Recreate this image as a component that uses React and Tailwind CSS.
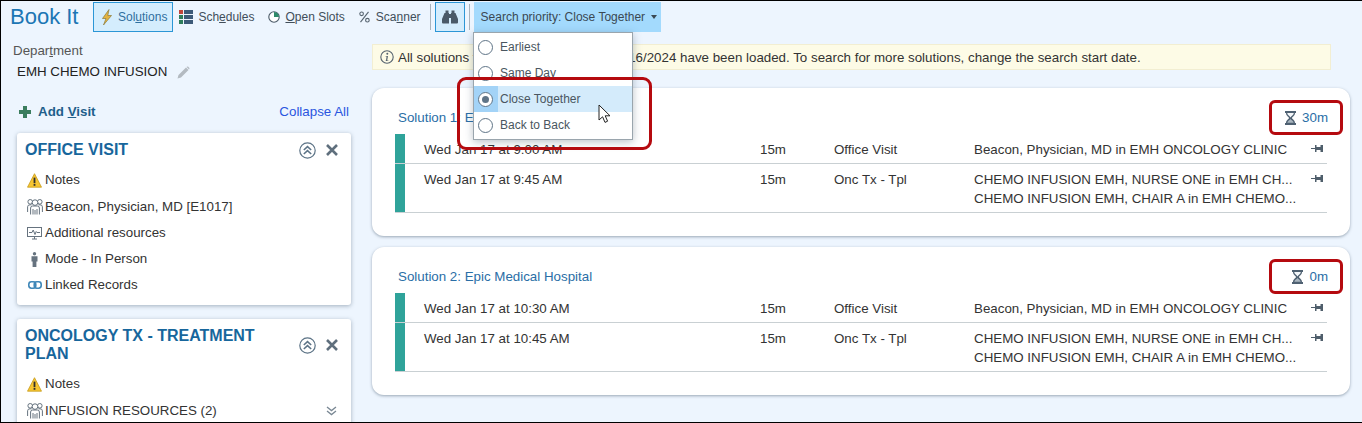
import { Fragment } from 'react';

const FONT = "font-['Liberation_Sans',Arial,sans-serif]";

function Bolt() {
  return (
    <svg width="12" height="17" viewBox="0 0 12 17">
      <path d="M8 0.5 L1.5 9.5 H5 L2.5 16 L10.5 6.5 H6.8 Z" fill="#e3b341" stroke="#8a7a3a" strokeWidth="0.7" />
    </svg>
  );
}

function GridIcon() {
  return (
    <svg width="14" height="14" viewBox="0 0 14 14">
      <rect x="0" y="0" width="4" height="4" fill="#c0453a" />
      <rect x="5" y="0" width="9" height="4" fill="#3d5a78" />
      <rect x="0" y="5" width="4" height="4" fill="#2e7d5b" />
      <rect x="5" y="5" width="9" height="4" fill="#3d5a78" />
      <rect x="0" y="10" width="4" height="4" fill="#2e7d5b" />
      <rect x="5" y="10" width="9" height="4" fill="#3d5a78" />
    </svg>
  );
}

function PieIcon() {
  return (
    <svg width="12" height="12" viewBox="0 0 12 12">
      <circle cx="6" cy="6" r="5.2" fill="#fff" stroke="#4a5a68" strokeWidth="1.1" />
      <path d="M6 6 V1 A5 5 0 0 1 11 6 Z" fill="#2e8a6a" />
    </svg>
  );
}

function PercentIcon() {
  return (
    <svg width="11" height="12" viewBox="0 0 11 12" fill="none" stroke="#56636f" strokeWidth="1.1">
      <circle cx="2.6" cy="2.8" r="1.8" />
      <circle cx="8.4" cy="9.2" r="1.8" />
      <path d="M9.5 0.8 L1.5 11.2" />
    </svg>
  );
}

function Binoculars() {
  return (
    <svg width="16" height="14" viewBox="0 0 16 14" fill="#4a5a68">
      <path d="M3.5 0.5 H6.5 V3 H7 V13.5 H1 Q0 13.5 0 12.5 V9 L2.5 3 H3.5 Z" />
      <path d="M9.5 0.5 H12.5 V3 H13.5 L16 9 V12.5 Q16 13.5 15 13.5 H9 V3 H9.5 Z" />
      <rect x="7" y="4" width="2" height="4" />
    </svg>
  );
}

function Pencil() {
  return (
    <svg width="13" height="13" viewBox="0 0 13 13" fill="#b3bac1">
      <path d="M0.5 12.5 L1.5 9 L9 1.5 L11.5 4 L4 11.5 Z" />
      <path d="M9.8 0.8 Q10.6 0.2 11.3 0.8 L12.2 1.7 Q12.8 2.4 12.2 3.2 L12 3.4 L9.6 1 Z" />
    </svg>
  );
}

function Plus() {
  return (
    <svg width="12" height="12" viewBox="0 0 12 12" fill="#3b7d5e">
      <path d="M4 0 H8 V4 H12 V8 H8 V12 H4 V8 H0 V4 H4 Z" />
    </svg>
  );
}

function Info() {
  return (
    <svg width="14" height="14" viewBox="0 0 14 14">
      <circle cx="7" cy="7" r="6.2" fill="none" stroke="#56636f" strokeWidth="1.1" />
      <circle cx="7.3" cy="3.8" r="1" fill="#56636f" />
      <path d="M5.6 6 H8 L7.2 10.4 H8.4 V11 H5.6 V10.4 H6 L6.6 6.6 H5.6 Z" fill="#56636f" />
    </svg>
  );
}

function Warning() {
  return (
    <svg width="15" height="15" viewBox="0 0 15 15">
      <path d="M7.5 0.7 L14.5 14.2 H0.5 Z" fill="#f6c532" stroke="#c79a1a" strokeWidth="0.8" strokeLinejoin="round" />
      <rect x="6.6" y="4.6" width="1.8" height="5.6" fill="#2f2f2f" />
      <rect x="6.6" y="11" width="1.8" height="1.8" fill="#2f2f2f" />
    </svg>
  );
}

function People() {
  return (
    <svg width="16" height="16" viewBox="0 0 16 16" fill="none" stroke="#66737f" strokeWidth="1">
      <circle cx="3.2" cy="2.8" r="2.3" />
      <circle cx="12.8" cy="2.8" r="2.3" />
      <circle cx="8" cy="3.6" r="2.8" fill="#fff" />
      <path d="M0.6 13 V7.8 Q0.6 5.8 3 5.8 H4.6 M15.4 13 V7.8 Q15.4 5.8 13 5.8 H11.4" />
      <path d="M3.6 15.5 V9 Q3.6 7 5.6 7 H10.4 Q12.4 7 12.4 9 V15.5" />
      <path d="M6 15.5 V10 M10 15.5 V10 M8 15.5 V11" />
    </svg>
  );
}

function Monitor() {
  return (
    <svg width="15" height="13" viewBox="0 0 15 13" fill="none" stroke="#66737f" strokeWidth="1">
      <rect x="0.5" y="0.5" width="14" height="9" />
      <path d="M2 5.5 H5 L6.2 3 L8 7.5 L9.2 4.5 L10 5.5 H13" />
      <path d="M5 12 H10 M7.5 9.5 V12" />
    </svg>
  );
}

function Person() {
  return (
    <svg width="7" height="15" viewBox="0 0 7 15" fill="#66737f">
      <circle cx="3.5" cy="1.7" r="1.7" />
      <path d="M0.5 4.2 H6.5 V9.5 H5.4 V15 H1.6 V9.5 H0.5 Z" />
    </svg>
  );
}

function LinkIcon() {
  return (
    <svg width="14" height="8" viewBox="0 0 14 8" fill="none" stroke="#3f87b8" strokeWidth="1.6">
      <rect x="0.8" y="0.8" width="7" height="6.4" rx="2.6" />
      <rect x="6.2" y="0.8" width="7" height="6.4" rx="2.6" />
    </svg>
  );
}

function CollapseBtn() {
  return (
    <svg width="17" height="17" viewBox="0 0 17 17" fill="none" stroke="#5c7386" strokeWidth="1.2">
      <circle cx="8.5" cy="8.5" r="7.7" />
      <path d="M4.8 8 L8.5 4.6 L12.2 8 M4.8 12 L8.5 8.6 L12.2 12" strokeWidth="1.5" />
    </svg>
  );
}

function CloseBtn() {
  return (
    <svg width="12" height="12" viewBox="0 0 12 12" stroke="#5f6f7d" strokeWidth="2.6">
      <path d="M1 1 L11 11 M11 1 L1 11" />
    </svg>
  );
}

function ChevronsDown() {
  return (
    <svg width="11" height="10" viewBox="0 0 11 10" fill="none" stroke="#7a8894" strokeWidth="1.3">
      <path d="M1 1 L5.5 4.6 L10 1 M1 5 L5.5 8.6 L10 5" />
    </svg>
  );
}

function PinIcon() {
  return (
    <svg width="12" height="9" viewBox="0 0 12 9" fill="#4f5e6b">
      <rect x="0" y="4" width="4" height="1" />
      <path d="M4 1 H5.5 V3 H9.5 V1 H12 V8 H9.5 V6 H5.5 V8 H4 Z" />
    </svg>
  );
}

function Hourglass() {
  return (
    <svg width="11" height="14" viewBox="0 0 11 14">
      <path d="M0 0 H11 V2 H10 C10 5 7 5.8 7 7 C7 8.2 10 9 10 12 H11 V14 H0 V12 H1 C1 9 4 8.2 4 7 C4 5.8 1 5 1 2 H0 Z" fill="#4f6172" />
      <path d="M2.2 2 H8.8 C8.7 4.3 6 5.2 5.5 6.4 C5 5.2 2.3 4.3 2.2 2 Z" fill="#f4f7fa" />
      <path d="M5.5 8 C6 9 8.4 9.8 8.7 11.8 H2.3 C2.6 9.8 5 9 5.5 8 Z" fill="#a9b5bf" />
    </svg>
  );
}

function Radio({ checked }) {
  return (
    <span className="flex h-[15px] w-[15px] items-center justify-center rounded-full border border-[#5f7487] bg-white">
      {checked && <span className="h-[7px] w-[7px] rounded-full bg-[#5f7487]" />}
    </span>
  );
}

function Cursor() {
  return (
    <svg width="13" height="20" viewBox="0 0 13 20">
      <path d="M1 1 V16 L4.6 12.8 L7 18.4 L9.6 17.2 L7.2 11.8 H12 Z" fill="#fff" stroke="#222" strokeWidth="1" strokeLinejoin="round" />
    </svg>
  );
}

function ToolItem({ icon, pre, u, post, className }) {
  return (
    <div className={`flex h-[30px] items-center ${className}`}>
      {icon}
      <span>
        {pre}
        <span className="underline">{u}</span>
        {post}
      </span>
    </div>
  );
}

function VisitRow({ icon, children, trailing }) {
  return (
    <div className="flex h-[26px] items-center text-[13.33px] text-[#333] first:h-[27px] first:pb-px">
      <span className="flex w-[21px] shrink-0 items-center justify-center">{icon}</span>
      <span className="flex-1">{children}</span>
      {trailing}
    </div>
  );
}

function VisitCard({ title, children }) {
  return (
    <div className="rounded-[3px] bg-white pt-[8px] pb-[7px] pr-[13px] pl-[8px] shadow-[0_1px_4px_rgba(70,90,110,0.45)]">
      <div className="mb-[8px] flex justify-between">
        <div className="w-[260px] text-[16px] leading-[18px] font-bold text-[#17669c]">{title}</div>
        <div className="flex items-center gap-[10px]">
          <CollapseBtn />
          <CloseBtn />
        </div>
      </div>
      <div className="-ml-[1px]">{children}</div>
    </div>
  );
}

const apptRows = (first, second) => [
  {
    time: first,
    type: 'Office Visit',
    lines: ['Beacon, Physician, MD in EMH ONCOLOGY CLINIC'],
  },
  {
    time: second,
    type: 'Onc Tx - Tpl',
    lines: ['CHEMO INFUSION EMH, NURSE ONE in EMH CH...', 'CHEMO INFUSION EMH, CHAIR A in EMH CHEMO...'],
  },
];

function SolutionCard({ title, wait, rows }) {
  return (
    <div className="h-[148px] rounded-[12px] bg-white pt-[21px] pl-[23px] pr-[23px] shadow-[0_1px_3px_rgba(70,90,110,0.5)]">
      <div className="-mr-px flex h-[18px] items-center justify-between pl-[3px] text-[13.33px] text-[#2a6ea6]">
        <span>{title}</span>
        <span className="flex items-center gap-[6px]">
          <Hourglass />
          {wait}
        </span>
      </div>
      <div className="mt-[7px]">
        {rows.map((r, i) => (
          <div
            key={i}
            className={`flex border-b border-[#c9d0d3] text-[13.33px] leading-[19px] text-[#333] ${i === 0 ? 'h-[30px]' : 'h-[49px]'}`}
          >
            <div className="mr-[19px] w-[10px] shrink-0 bg-[#2fa39a]" />
            <div className="flex flex-1 pt-[6px]">
              <div className="w-[336px] shrink-0">{r.time}</div>
              <div className="w-[74px] shrink-0">15m</div>
              <div className="w-[140px] shrink-0">{r.type}</div>
              <div className="flex-1">
                {r.lines.map((l) => (
                  <Fragment key={l}>
                    {l}
                    <br />
                  </Fragment>
                ))}
              </div>
              <div className="pt-[4px] pr-[4px]">
                <PinIcon />
              </div>
            </div>
          </div>
        ))}
      </div>
    </div>
  );
}

export default function App() {
  return (
    <div className={`relative h-[423px] w-[1362px] overflow-hidden border-t border-b border-l border-black bg-[#edf5fe] ${FONT}`}>
      {/* toolbar */}
      <div className="flex h-[31px] items-center pt-[1px] text-[12px]">
        <div className="w-[92px] pl-[9px] text-[22px] leading-none text-[#1c76b4]">Book It</div>
        <ToolItem
          className="gap-[5px] border border-[#2b96d6] bg-[#d4edfd] pl-[7px] pr-[5px] text-[#2f6f9f]"
          icon={<Bolt />}
          pre="Sol"
          u="u"
          post="tions"
        />
        <ToolItem className="gap-[5px] px-[6px] text-[#414e5a]" icon={<GridIcon />} pre="Sch" u="e" post="dules" />
        <ToolItem className="ml-[2px] gap-[5px] px-[6px] text-[#414e5a]" icon={<PieIcon />} pre="" u="O" post="pen Slots" />
        <ToolItem className="ml-[2px] gap-[6px] pl-[6px] pr-[5px] text-[#414e5a]" icon={<PercentIcon />} pre="Sca" u="n" post="ner" />
        <div className="mx-[4px] h-[26px] w-px bg-[#aab4bc]" />
        <div className="flex h-[30px] w-[30px] items-center justify-center border border-[#2b96d6] bg-[#d4edfd]">
          <Binoculars />
        </div>
        <div className="mx-[4px] h-[26px] w-px bg-[#aab4bc]" />
        <div className="flex h-[30px] w-[187px] items-center gap-[6px] bg-[#a3dafd] pl-[7px] text-[#3a4853]">
          Search priority: Close Together
          <span className="h-0 w-0 border-x-[3px] border-t-[4px] border-x-transparent border-t-[#3a4853]" />
        </div>
      </div>

      <div className="flex">
        {/* left panel */}
        <div className="w-[371px] shrink-0 pl-[16px] pr-[21px] pt-[12px] text-[13.33px]">
          <div className="-ml-[4px] leading-[14px] text-[#555]">
            Depar<span className="underline">t</span>ment
          </div>
          <div className="mt-[6px] flex h-[16px] items-center gap-[10px] text-[#222]">
            EMH CHEMO INFUSION
            <Pencil />
          </div>
          <div className="mt-[24px] flex h-[16px] items-center justify-between pl-[2px]">
            <span className="flex items-center gap-[7px] font-bold text-[#1f5f8b]">
              <Plus />
              <span>
                Add <span className="underline">V</span>isit
              </span>
            </span>
            <span className="pr-[2px] text-[#2a55e0]">Collapse All</span>
          </div>
          <div className="mt-[13px] flex flex-col gap-[14px]">
            <VisitCard title="OFFICE VISIT">
              <VisitRow icon={<Warning />}>Notes</VisitRow>
              <VisitRow icon={<People />}>Beacon, Physician, MD [E1017]</VisitRow>
              <VisitRow icon={<Monitor />}>Additional resources</VisitRow>
              <VisitRow icon={<Person />}>Mode - In Person</VisitRow>
              <VisitRow icon={<LinkIcon />}>Linked Records</VisitRow>
            </VisitCard>
            <VisitCard title="ONCOLOGY TX - TREATMENT PLAN">
              <VisitRow icon={<Warning />}>Notes</VisitRow>
              <VisitRow icon={<People />} trailing={<span className="pr-[1px]"><ChevronsDown /></span>}>
                INFUSION RESOURCES (2)
              </VisitRow>
            </VisitCard>
          </div>
        </div>

        {/* solutions */}
        <div className="w-[978px] shrink-0 pt-[12px]">
          <div className="flex h-[26px] w-[959px] items-center gap-[4px] border border-[#f2eed2] bg-[#fdfbe6] pl-[7px] text-[13.33px] text-[#333]">
            <Info />
            <span className="pt-px">
              <span className="mr-[2px]">All solutions from the week starting 01/</span>16/2024 have been loaded. To search for more solutions, change the search start date.
            </span>
          </div>
          <div className="mt-[18px] flex flex-col gap-[11px]">
            <SolutionCard title="Solution 1: Epic Medical Hospital" wait="30m" rows={apptRows('Wed Jan 17 at 9:00 AM', 'Wed Jan 17 at 9:45 AM')} />
            <SolutionCard title="Solution 2: Epic Medical Hospital" wait="0m" rows={apptRows('Wed Jan 17 at 10:30 AM', 'Wed Jan 17 at 10:45 AM')} />
          </div>
        </div>
      </div>

      {/* priority dropdown */}
      <div className="absolute top-[31px] left-[472px] w-[160px] border border-[#9aa5ad] bg-white py-[1px] text-[12px] text-[#4a5660] shadow-[0_2px_8px_rgba(60,80,100,0.35)]">
        {['Earliest', 'Same Day', 'Close Together', 'Back to Back'].map((o) => {
          const on = o === 'Close Together';
          return (
            <div key={o} className={`flex h-[26px] items-center ${on ? 'bg-[#d4ebfb]' : ''}`}>
              <span className={`flex h-[26px] w-[24px] items-center justify-center pr-[2px] ${on ? 'bg-[#a3d3f7]' : ''}`}>
                <Radio checked={on} />
              </span>
              <span className="pl-[2px]">{o}</span>
            </div>
          );
        })}
      </div>

      {/* callouts drawn over the screenshot */}
      <div className="absolute top-[76px] left-[456px] h-[73px] w-[195px] rounded-[9px] border-[3px] border-[#b50a0f]" />
      <div className="absolute top-[99px] left-[1268px] h-[35px] w-[74px] rounded-[6px] border-[3px] border-[#b50a0f]" />
      <div className="absolute top-[258px] left-[1268px] h-[35px] w-[74px] rounded-[6px] border-[3px] border-[#b50a0f]" />
      <div className="absolute top-[103px] left-[597px]">
        <Cursor />
      </div>
    </div>
  );
}
